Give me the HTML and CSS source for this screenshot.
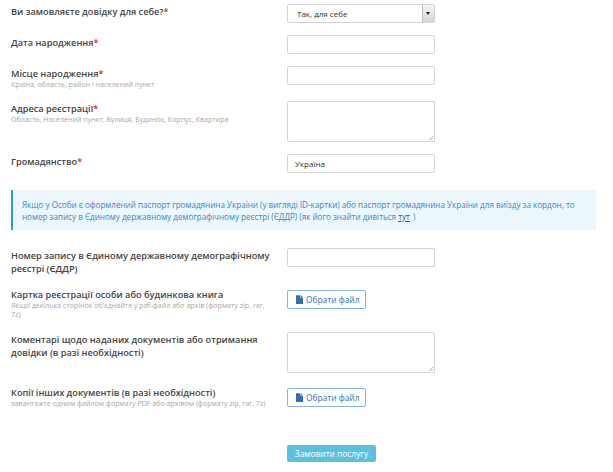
FILE: index.html
```html
<!DOCTYPE html>
<html lang="uk">
<head>
<meta charset="utf-8">
<link rel="stylesheet" href="styles.css">
</head>
<body>
<form class="form">
  <div class="row row-first">
    <div class="label-col"><div class="label">Ви замовляєте довідку для себе?<span class="req">*</span></div></div>
    <div class="select"><span class="select-text">Так, для себе</span><span class="select-arrow"></span></div>
  </div>
  <div class="row">
    <div class="label-col"><div class="label">Дата народження<span class="req">*</span></div></div>
    <div class="input"></div>
  </div>
  <div class="row">
    <div class="label-col"><div class="label">Місце народження<span class="req">*</span></div><div class="hint">Країна, область, район і населений пункт</div></div>
    <div class="input"></div>
  </div>
  <div class="row">
    <div class="label-col"><div class="label">Адреса реєстрації<span class="req">*</span></div><div class="hint">Область, Населений пункт, Вулиця, Будинок, Корпус, Квартира</div></div>
    <div class="textarea"><span class="grip"></span></div>
  </div>
  <div class="row row-before-info">
    <div class="label-col"><div class="label">Громадянство<span class="req">*</span></div></div>
    <div class="input"><span class="input-text">Україна</span></div>
  </div>
  <div class="info">Якщо у Особи є оформлений паспорт громадянина України (у вигляді ID-картки) або паспорт громадянина України для виїзду за кордон, то номер запису в Єдиному державному демографічному реєстрі (ЄДДР) (як його знайти дивіться <a class="link" href="#">тут</a><span class="paren">)</span></div>
  <div class="row">
    <div class="label-col"><div class="label">Номер запису в Єдиному державному демографічному реєстрі (ЄДДР)</div></div>
    <div class="input"></div>
  </div>
  <div class="row row-file">
    <div class="label-col"><div class="label">Картка реєстрації особи або будинкова книга</div><div class="hint">Якщо декілька сторінок об'єднайте у pdf-файл або архів (формату zip, rar, 7z)</div></div>
    <div><span class="file-btn"><svg class="file-icon" viewBox="0 0 8 10" width="7" height="9"><path d="M0 0H5V3H8V10H0Z M5.6 0L8 2.4H5.6Z" fill="#2f6fb5"/></svg>Обрати файл</span></div>
  </div>
  <div class="row">
    <div class="label-col"><div class="label">Коментарі щодо наданих документів або отримання довідки (в разі необхідності)</div></div>
    <div class="textarea"><span class="grip"></span></div>
  </div>
  <div class="row row-last">
    <div class="label-col"><div class="label">Копії інших документів (в разі необхідності)</div><div class="hint">завантажте одним файлом формату PDF або архівом (формату zip, rar, 7z)</div></div>
    <div><span class="file-btn"><svg class="file-icon" viewBox="0 0 8 10" width="7" height="9"><path d="M0 0H5V3H8V10H0Z M5.6 0L8 2.4H5.6Z" fill="#2f6fb5"/></svg>Обрати файл</span></div>
  </div>
  <div class="row">
    <div></div>
    <div><span class="submit">Замовити послугу</span></div>
  </div>
</form>
</body>
</html>
```

FILE: styles.css
```css
html, body {
  margin: 0;
  padding: 0;
  background: #fff;
}
body {
  font-family: "Open Sans", "Liberation Sans", sans-serif;
  color: #3a3a3a;
}
.form {
  width: 585px;
  padding: 4px 0 0 11px;
}
.row {
  display: grid;
  grid-template-columns: 276px 148px;
  align-items: start;
  margin-bottom: 12px;
}
.row-before-info {
  margin-bottom: 17px;
}
.row-file {
  margin-bottom: 13px;
}
.row-last {
  margin-bottom: 32px;
}
.label-col {
  padding-right: 13px;
}
.label {
  font-size: 9.2px;
  font-weight: 600;
  line-height: 13px;
  color: #444;
  padding-top: 1px;
}
.req {
  color: #e0261f;
}
.hint {
  font-size: 7.1px;
  line-height: 9px;
  color: #a8a8a8;
}
.input, .select, .textarea {
  box-sizing: border-box;
  width: 148px;
  height: 19px;
  border: 1px solid #d4d4d4;
  border-radius: 2px;
  background: #fff;
  display: flex;
  align-items: center;
  position: relative;
}
.textarea {
  height: 41px;
}
.grip {
  position: absolute;
  right: 1px;
  bottom: 1px;
  width: 4px;
  height: 4px;
  background: linear-gradient(135deg, transparent 50%, #bbb 50%, #bbb 60%, transparent 60%, transparent 75%, #bbb 75%, #bbb 85%, transparent 85%);
}
.input-text {
  font-size: 8px;
  color: #333;
  padding-left: 7px;
}
.select-text {
  font-size: 8px;
  color: #333;
  padding-left: 9px;
  flex: 1;
}
.select-arrow {
  align-self: stretch;
  width: 11px;
  border-left: 1px solid #bdbdbd;
  background: linear-gradient(#f4f4f4, #d6d6d6);
  position: relative;
}
.select-arrow::after {
  content: "";
  position: absolute;
  left: 3px;
  top: 7px;
  border-left: 2.5px solid transparent;
  border-right: 2.5px solid transparent;
  border-top: 3px solid #222;
}
.info {
  box-sizing: border-box;
  width: 585px;
  height: 40px;
  margin-bottom: 18px;
  background: #ecf7fb;
  border-left: 2px solid #2b9ec8;
  padding: 9px 0 0 9px;
  font-size: 8.1px;
  line-height: 12px;
  color: #3987c3;
}
.link {
  color: #1f5fae;
  text-decoration: underline;
  padding-right: 2px;
}
.paren {
  margin-left: 1px;
}
.file-btn {
  box-sizing: border-box;
  display: inline-flex;
  align-items: center;
  gap: 3px;
  width: 79px;
  height: 19px;
  padding-left: 8px;
  border: 1px solid #86b3e0;
  border-radius: 2px;
  font-size: 8.4px;
  color: #2f6fb5;
  background: #fff;
}
.submit {
  display: inline-flex;
  align-items: center;
  justify-content: center;
  width: 89px;
  height: 17px;
  background: #5bc0de;
  border-radius: 2px;
  color: #fff;
  font-size: 8.4px;
}
```
